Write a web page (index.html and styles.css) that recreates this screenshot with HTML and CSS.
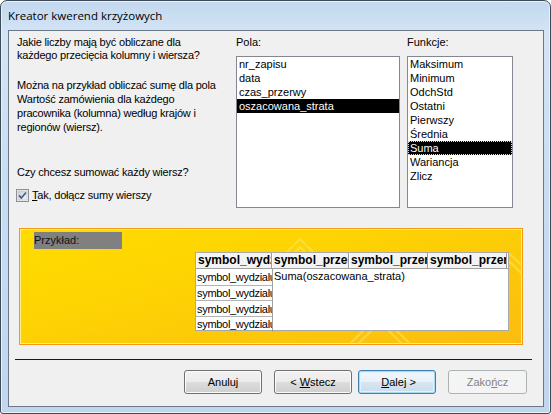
FILE: index.html
```html
<!DOCTYPE html>
<html lang="pl">
<head>
<meta charset="utf-8">
<title>Kreator kwerend krzyżowych</title>
<link rel="stylesheet" href="styles.css">
</head>
<body>
<div class="window">
  <div class="titlebar"><span class="title">Kreator kwerend krzyżowych</span></div>
  <div class="client">
    <div class="top">
      <div class="intro">
        <p class="p1">Jakie liczby mają być obliczane dla<br>każdego przecięcia kolumny i wiersza?</p>
        <p class="p2">Można na przykład obliczać sumę dla pola<br>Wartość zamówienia dla każdego<br>pracownika (kolumna) według krajów i<br>regionów (wiersz).</p>
        <p class="q">Czy chcesz sumować każdy wiersz?</p>
        <div class="check">
          <svg class="box" width="13" height="13" viewBox="0 0 13 13">
            <defs>
              <linearGradient id="cb" x1="0" y1="0" x2="1" y2="1">
                <stop offset="0" stop-color="#c9ced6"/>
                <stop offset="1" stop-color="#f4f5f6"/>
              </linearGradient>
            </defs>
            <rect x="0.5" y="0.5" width="12" height="12" fill="#f4f4f4" stroke="#8e8f8f"/>
            <rect x="2" y="2" width="9" height="9" fill="url(#cb)" stroke="#b9bdc3" stroke-width="0.6"/>
            <path d="M3 6.4 L5.3 9 L10 3.4" fill="none" stroke="#3f5a92" stroke-width="1.6"/>
          </svg>
          <span><u>T</u>ak, dołącz sumy wierszy</span>
        </div>
      </div>
      <div class="col pola">
        <div class="label">Pola:</div>
        <ul class="list">
          <li>nr_zapisu</li>
          <li>data</li>
          <li>czas_przerwy</li>
          <li class="sel">oszacowana_strata</li>
        </ul>
      </div>
      <div class="col funkcje">
        <div class="label">Funkcje:</div>
        <ul class="list">
          <li>Maksimum</li>
          <li>Minimum</li>
          <li>OdchStd</li>
          <li>Ostatni</li>
          <li>Pierwszy</li>
          <li>Średnia</li>
          <li class="sel focus">Suma</li>
          <li>Wariancja</li>
          <li>Zlicz</li>
        </ul>
      </div>
    </div>

    <div class="sample">
      <svg class="deco" width="502" height="115" viewBox="0 0 502 115">
        <g fill="none" stroke="#ffe66a" stroke-width="2" opacity="0.55">
          <path d="M250 40 L280 10 L310 40"/>
          <path d="M258 40 L280 18 L302 40"/>
          <path d="M330 115 L360 85 L390 115"/>
          <path d="M338 115 L360 93 L382 115"/>
          <path d="M455 60 L490 25 L502 37"/>
          <path d="M463 60 L490 33 L502 45"/>
        </g>
      </svg>
      <div class="sample-label">Przykład:</div>
      <div class="xtab">
        <div class="hrow">
          <div class="hcell w1"><span class="clip">symbol_wydzialu</span></div>
          <div class="hcell w2"><span class="clip">symbol_przerwy</span></div>
          <div class="hcell w3"><span class="clip">symbol_przerwy</span></div>
          <div class="hcell w3"><span class="clip">symbol_przerwy</span></div>
          <div class="hcell wend"></div>
        </div>
        <div class="body">
          <div class="rows">
            <div class="rcell r1">symbol_wydzialu</div>
            <div class="rcell r2">symbol_wydzialu</div>
            <div class="rcell r3">symbol_wydzialu</div>
            <div class="rcell r4">symbol_wydzialu</div>
          </div>
          <div class="data">Suma(oszacowana_strata)</div>
        </div>
      </div>
    </div>

    <div class="sep"></div>

    <div class="buttons">
      <button class="btn">Anuluj</button>
      <button class="btn gap-s">&lt; <u>W</u>stecz</button>
      <button class="btn default">&nbsp;<u>D</u>alej &gt;</button>
      <button class="btn disabled gap-l">Zako<u>ń</u>cz</button>
    </div>
  </div>
</div>
</body>
</html>
```

FILE: styles.css
```css
* { box-sizing: border-box; }

html, body {
  margin: 0;
  padding: 0;
  background: #ffffff;
}

body {
  font-family: "Liberation Sans", Arial, sans-serif;
  font-size: 11px;
  color: #000;
}

.window {
  width: 551px;
  height: 414px;
  border: 1px solid #3d4a58;
  border-radius: 7px 7px 3px 3px;
  padding: 0 6px 6px 7px;
  background: linear-gradient(180deg, #c3d8ee 0%, #d3e4f5 8%, #cadef2 40%, #c1d6ec 100%);
  box-shadow: inset 0 0 0 1px #e8f1fa;
  display: flex;
  flex-direction: column;
}

.titlebar {
  height: 29px;
  display: flex;
  align-items: center;
  padding-left: 0;
}

.title {
  font-family: "Open Sans", "Noto Sans", sans-serif;
  font-size: 11.5px;
  color: #000;
  line-height: 16px;
  margin-top: 1px;
}

.client {
  width: 536px;
  height: 377px;
  border: 1px solid #6a7786;
  background: #f0f0f0;
  display: flex;
  flex-direction: column;
}

.top {
  display: flex;
  padding: 5px 0 0 8px;
  height: 177px;
  flex: none;
}

.intro {
  width: 219px;
  letter-spacing: -0.2px;
}

.intro p {
  margin: 0;
  line-height: 13px;
}

.intro .p2 {
  margin-top: 16px;
  line-height: 14px;
}

.intro .q {
  margin-top: 32px;
}

.check {
  margin-top: 10px;
  margin-left: -1px;
  display: flex;
  align-items: center;
  gap: 3px;
  line-height: 13px;
}

.check .box { display: block; flex: none; }

.col .label {
  height: 20px;
  line-height: 13px;
}

.pola { width: 164px; }
.funkcje { width: 106px; margin-left: 7px; }

.list {
  list-style: none;
  margin: 0;
  padding: 0;
  height: 152px;
  background: #ffffff;
  border: 1px solid #828790;
}

.list li {
  height: 14px;
  line-height: 14px;
  padding-left: 2px;
  white-space: nowrap;
}

.list li.sel {
  background: #000000;
  color: #ffffff;
}

.list li.focus {
  outline: 1px dotted #d8d8d8;
  outline-offset: -1px;
}

.sample {
  position: relative;
  margin: 20px 0 0 10px;
  width: 504px;
  height: 117px;
  flex: none;
  border: 1px solid #f39a12;
  box-shadow: inset 0 0 0 1px #ffec8a;
  background: linear-gradient(165deg, #ffdc00 0%, #fed402 35%, #fcc70a 70%, #fbbd10 100%);
  overflow: hidden;
}

.deco {
  position: absolute;
  left: 0;
  top: 0;
  pointer-events: none;
}

.sample-label {
  position: relative;
  margin: 3px 0 0 14px;
  width: 88px;
  height: 17px;
  line-height: 17px;
  background: #808080;
  color: #111;
  font-size: 11px;
}

.xtab {
  position: relative;
  margin: 3px 0 0 175px;
  width: 314px;
  height: 79px;
  background: #ffffff;
  border: 1px solid #a9a9a9;
  display: flex;
  flex-direction: column;
}

.hrow {
  display: flex;
  height: 16px;
  border-bottom: 1px solid #a0a0a0;
  background: #f3f3f3;
}

.hcell {
  font-weight: bold;
  font-size: 12px;
  line-height: 15px;
  overflow: hidden;
  white-space: nowrap;
  padding-left: 2px;
  border-right: 1px solid #9c9c9c;
  box-shadow: inset 1px 0 0 #ffffff;
}

.hcell .clip {
  display: block;
  overflow: hidden;
  white-space: nowrap;
}

.w1 { width: 76px; }
.w2 { width: 77px; }
.w3 { width: 79px; }
.wend { flex: 1; border-right: none; padding: 0; }

.body {
  flex: 1;
  display: flex;
}

.rows {
  width: 77px;
  display: flex;
  flex-direction: column;
  border-right: 1px solid #a0a0a0;
}

.rcell {
  overflow: hidden;
  white-space: nowrap;
  font-size: 11px;
  letter-spacing: -0.3px;
  padding-left: 1px;
  border-bottom: 1px solid #b4b4b4;
}

.r1 { height: 17px; line-height: 16px; }
.r2 { height: 15px; line-height: 14px; }
.r3 { height: 16px; line-height: 16px; }
.r4 { flex: 1; border-bottom: none; line-height: 15px; }

.data {
  flex: 1;
  padding-left: 1px;
  line-height: 15px;
  font-size: 11px;
}

.sep {
  margin: 14px 0 0 6px;
  width: 517px;
  height: 1px;
  flex: none;
  background: #1a1a1a;
}

.buttons {
  display: flex;
  justify-content: flex-end;
  padding-right: 16px;
  margin-top: 10px;
}

.btn {
  width: 78px;
  height: 24px;
  padding: 0;
  font-family: "Liberation Sans", Arial, sans-serif;
  font-size: 11px;
  color: #000;
  border: 1px solid #707070;
  border-radius: 3px;
  background: linear-gradient(180deg, #f2f2f2 0%, #ebebeb 49%, #dddddd 50%, #cfcfcf 100%);
  box-shadow: inset 0 0 0 1px #fbfbfb;
}

.btn + .btn { margin-left: 6px; }
.btn.gap-s { margin-left: 12px; }
.btn.gap-l { margin-left: 12px; width: 79px; }

.btn.default {
  border-color: #3c7fb1;
  background: linear-gradient(180deg, #f2f7fb 0%, #e8f1f8 49%, #d8e6f1 50%, #cadbe9 100%);
  box-shadow: inset 0 0 0 1px #a8d9f5, inset 0 0 0 2px #e4f3fb;
}

.btn.disabled {
  color: #838383;
  border-color: #adb2b5;
  background: #f4f4f4;
  box-shadow: none;
}
```
